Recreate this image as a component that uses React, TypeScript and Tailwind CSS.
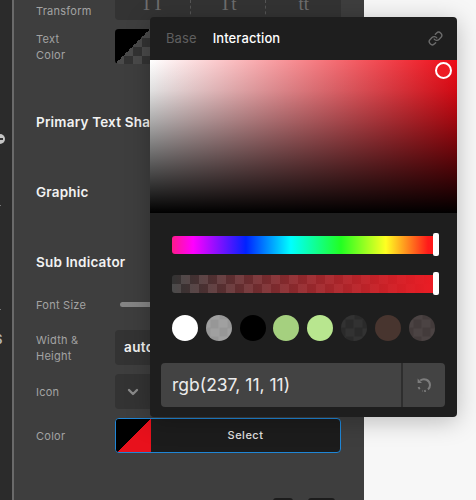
import React from 'react';
import { ChevronDown, Link } from 'lucide-react';

const checker = 'bg-[repeating-conic-gradient(#4a4a4a_0%_25%,#333333_0%_50%)] bg-[length:18px_18px]';

const swatches = [
    'bg-white',
    'bg-[repeating-conic-gradient(#a0a0a0_0%_25%,#979797_0%_50%)] bg-[length:17px_17px] bg-center',
    'bg-black',
    'bg-[#a5d07f]',
    'bg-[#b8e68f]',
    'bg-[repeating-conic-gradient(#323232_0%_25%,#2a2a2a_0%_50%)] bg-[length:17px_17px] bg-center',
    'bg-[#48352f]',
    'bg-[repeating-conic-gradient(#4b4343_0%_25%,#433b3b_0%_50%)] bg-[length:17px_17px] bg-center',
];

const Label = ({ children }: { children: React.ReactNode }) => (
    <div className="w-[79px] shrink-0 pt-[1px] text-[11px] leading-[16px] tracking-[0.25px] text-[#a3a3a3]">{children}</div>
);

const Heading = ({ children, className }: { children: React.ReactNode; className: string }) => (
    <div className={`text-[13.5px] leading-[18px] font-semibold tracking-[0.2px] text-[#f2f2f2] whitespace-nowrap ${className}`}>{children}</div>
);

const Slider = ({ className, children }: { className: string; children?: React.ReactNode }) => (
    <div className={`relative h-[18px] w-[264px] rounded-[3px] ${className}`}>
        {children}
        <div className="absolute right-[-3px] top-[-3px] h-[23px] w-[6px] rounded-[2px] bg-white" />
    </div>
);

export default function App() {
    return (
        <div className="relative flex h-[500px] w-[476px] overflow-hidden bg-[#f7f7f7] font-['Inter','Liberation_Sans',sans-serif]">
            {/* 左侧工具条 */}
            <div className="flex w-[12px] shrink-0 flex-col bg-[#2b2b2b]">
                <div className="mt-[134px] -ml-[5px] flex h-[10px] w-[10px] items-center justify-center rounded-full bg-[#c4c4c4]">
                    <div className="h-[2px] w-[6px] bg-[#333]" />
                </div>
                <div className="mt-[61px] h-px w-[1px] bg-[#777]" />
                <div className="mt-[103px] h-px w-[1px] bg-[#777]" />
                <div className="mt-[21px] -ml-[6px] text-[13px] leading-[16px] font-semibold text-[#b5b5b5]">S</div>
            </div>
            <div className="w-[2px] shrink-0 bg-[#6a6a6a]" />

            {/* 设置面板 */}
            <div className="flex w-[350px] shrink-0 flex-col bg-[#3e3e3e] pl-[22px] pr-[23px]">
                <div className="flex h-[20px] items-start">
                    <div className="w-[79px] shrink-0 pt-[4px] text-[11px] leading-[15px] tracking-[0.25px] text-[#a3a3a3]">Transform</div>
                    <div className="flex h-[20px] w-[226px] overflow-hidden rounded-b-[4px] bg-[#333333] font-['Liberation_Serif',serif] text-[19px] leading-[8px] text-[#6e6e6e]">
                        <div className="flex-1 border-r border-dashed border-[#555] text-center">TT</div>
                        <div className="flex-1 border-r border-dashed border-[#555] text-center">Tt</div>
                        <div className="flex-1 text-center">tt</div>
                    </div>
                </div>

                <div className="mt-[9px] flex h-[35px] items-center">
                    <Label>Text<br />Color</Label>
                    <div className="flex h-[35px] w-[226px] overflow-hidden rounded-[4px] bg-[#1c1c1c]">
                        <div className={`h-full w-[35px] ${checker} bg-[length:10px_10px]`}>
                            <div className="h-full w-full bg-[linear-gradient(135deg,#000000_50%,transparent_50%)]" />
                        </div>
                    </div>
                </div>

                <Heading className="mt-[49px]">Primary Text Shadow</Heading>
                <Heading className="mt-[52px]">Graphic</Heading>
                <Heading className="mt-[52px]">Sub Indicator</Heading>

                <div className="mt-[25px] flex h-[16px] items-center">
                    <Label>Font Size</Label>
                    <div className="ml-[5px] h-[5px] w-[40px] rounded-full bg-[#858585]" />
                </div>

                <div className="mt-[18px] flex h-[35px] items-center">
                    <Label>Width &<br />Height</Label>
                    <div className="flex h-[35px] w-[226px] items-center rounded-[4px] bg-[#333333] pl-[9px] text-[13.5px] font-semibold tracking-[0.4px] text-[#f2f2f2]">auto</div>
                </div>

                <div className="mt-[9px] flex h-[35px] items-center">
                    <Label>Icon</Label>
                    <div className="flex h-[35px] w-[226px] items-center rounded-[4px] bg-[#333333]">
                        <div className="flex w-[35px] justify-center text-[#8a8a8a]">
                            <ChevronDown size={16} strokeWidth={3.5} />
                        </div>
                    </div>
                </div>

                <div className="mt-[9px] flex h-[35px] items-center">
                    <Label>Color</Label>
                    <div className="flex h-[35px] w-[226px] overflow-hidden rounded-[4px] border border-[#1f86d6] bg-[#1c1c1c]">
                        <div className="h-full w-[35px] shrink-0 bg-[linear-gradient(135deg,#000000_50%,#e8111c_50%)]" />
                        <div className="flex-1 text-center text-[11px] leading-[33px] font-medium tracking-[0.5px] text-[#e0e0e0]">Select</div>
                    </div>
                </div>

                <div className="mt-[45px] ml-[237px] flex gap-[15px]">
                    <div className="h-[3px] w-[20px] rounded-t-full bg-[#1c1c1c]" />
                    <div className="h-[3px] w-[27px] rounded-t-full bg-[#1c1c1c]" />
                </div>
            </div>

            {/* 颜色选择弹层 */}
            <div className="absolute left-[150px] top-[17px] flex h-[400px] w-[307px] flex-col overflow-hidden rounded-[4px] bg-[#1e1e1e] shadow-[0_4px_24px_rgba(0,0,0,0.25)]">
                <div className="flex h-[43px] shrink-0 items-center pl-[16px] pr-[14px] text-[13px] tracking-[0.1px]">
                    <span className="text-[#5f5f5f]">Base</span>
                    <span className="ml-[16px] font-medium text-white">Interaction</span>
                    <Link size={15} strokeWidth={2.25} className="ml-auto text-[#6b6b6b]" />
                </div>

                <div className="relative h-[153px] shrink-0 bg-[linear-gradient(to_right,#ffffff,#ed0b16)]">
                    <div className="h-full w-full bg-[linear-gradient(to_bottom,rgba(0,0,0,0),rgba(0,0,0,0.12)_20%,rgba(0,0,0,0.33)_40%,rgba(0,0,0,0.67)_70%,#000000)]" />
                    <div className="absolute left-[285px] top-[2px] h-[17px] w-[17px] rounded-full border-2 border-white bg-[#ed1c24]" />
                </div>

                <div className="mt-[23px] ml-[22px] flex flex-col gap-[21px]">
                    <Slider className="bg-[linear-gradient(to_right,#ff1a8c,#ff00ff_8%,#0022ff_28%,#00ffff_45%,#22ff22_64%,#ffff22_81%,#ff1a1a_97%)]" />
                    <Slider className={checker}>
                        <div className="h-full w-full rounded-[3px] bg-[linear-gradient(to_right,transparent,#ed1c24)]" />
                    </Slider>
                </div>

                <div className="mt-[22px] ml-[22px] flex gap-[7.8px]">
                    {swatches.map((color, i) => (
                        <div key={i} className={`h-[26px] w-[26px] rounded-full ${color}`} />
                    ))}
                </div>

                <div className="mt-[22px] ml-[11px] flex h-[44px] w-[284px] overflow-hidden rounded-[4px] bg-[#434343]">
                    <div className="flex flex-1 items-center pl-[11px] text-[17.5px] text-[#ececec]">rgb(237, 11, 11)</div>
                    <div className="w-[2px] bg-[#2e2e2e]" />
                    <div className="flex w-[42px] items-center justify-center text-[#7d7d7d]">
                        <svg width="18" height="18" viewBox="0 0 18 18" fill="none" stroke="currentColor" strokeWidth="2">
                            <path d="M5.2 4.6 A6 6 0 0 1 15 9 A6 6 0 0 1 13 13.5" />
                            <path d="M10.8 14.8 A6 6 0 0 1 7.2 14.8" strokeDasharray="1.6 1.6" />
                            <path d="M4.8 13 A6 6 0 0 1 3.6 11" />
                            <path d="M2.6 2.6 V7 H7" fill="currentColor" stroke="none" />
                        </svg>
                    </div>
                </div>
            </div>
        </div>
    );
}
